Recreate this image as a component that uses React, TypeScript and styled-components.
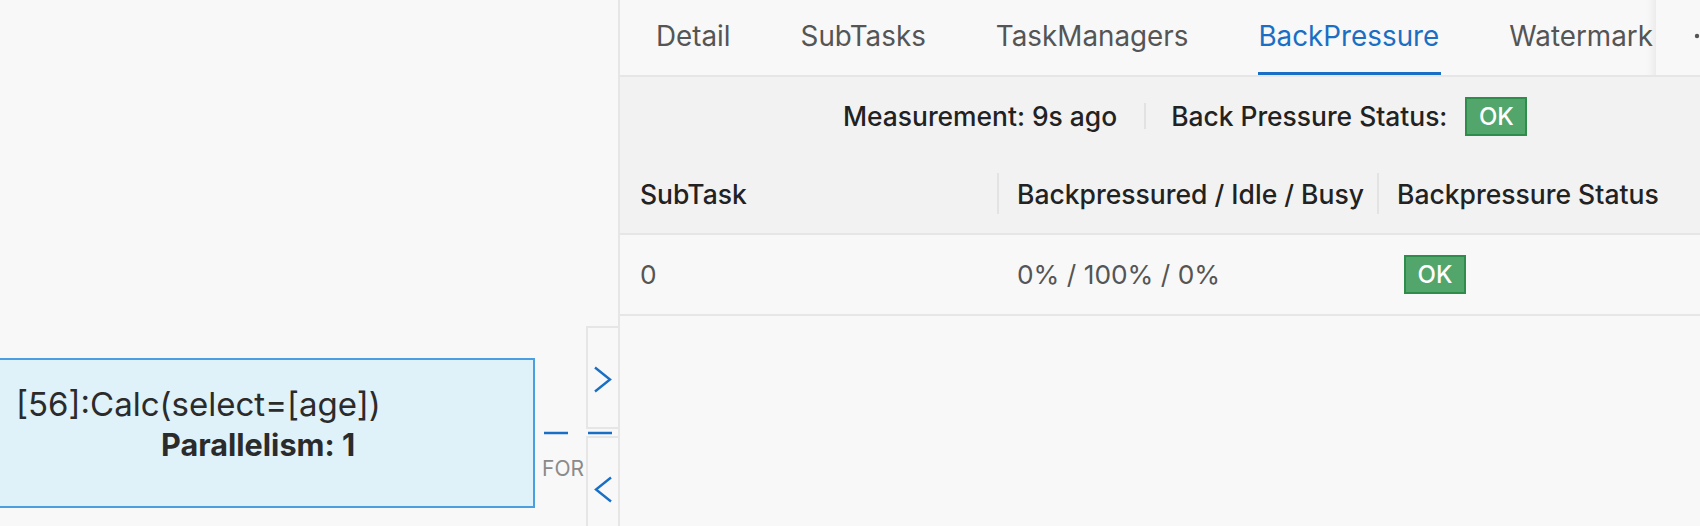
import React from 'react';
import styled, { createGlobalStyle } from 'styled-components';

const Global = createGlobalStyle`
  html, body { margin: 0; padding: 0; background: #f8f8f8; }
  body { font-family: Inter, "Noto Sans", sans-serif; -webkit-font-smoothing: antialiased; }
  #root { width: 1700px; height: 526px; overflow: hidden; }
`;

const BLUE = '#1a6fc5';

const Page = styled.div`
  display: flex;
  width: 1700px;
  height: 526px;
  overflow: hidden;
  background: #f8f8f8;
`;

const Canvas = styled.div`
  position: relative;
  flex: none;
  width: 618px;
  height: 100%;
  overflow: hidden;
`;

const Node = styled.div`
  position: absolute;
  left: -2px;
  top: 358px;
  width: 537px;
  height: 150px;
  box-sizing: border-box;
  border: 2px solid #4a9fe1;
  background: #dff1f9;
  padding-top: 26px;
  padding-left: 16px;
  color: #2b2b2b;
  line-height: 37px;
  white-space: nowrap;
`;

const NodeTitle = styled.div`
  font-size: 33px;
  font-weight: 400;
`;

const NodeMeta = styled.div`
  font-size: 30.6px;
  font-weight: 700;
  margin: 3px 0 0 145px;
`;

const Edge = styled.svg`
  position: absolute;
  left: 535px;
  top: 428px;
  overflow: visible;
`;

const EdgeLabel = styled.div`
  position: absolute;
  left: 542px;
  top: 456px;
  font-size: 21px;
  line-height: 26px;
  color: #8a8a8a;
  white-space: nowrap;
`;

const Toggle = styled.div<{ $top: number; $h: number }>`
  position: absolute;
  left: 586px;
  top: ${(p) => p.$top}px;
  width: 32px;
  height: ${(p) => p.$h}px;
  box-sizing: border-box;
  border: 2px solid #e6e6e6;
  border-right: none;
  background: #f8f8f8;
  display: flex;
  align-items: ${(p) => (p.$h > 100 ? 'flex-start' : 'center')};
  justify-content: center;
  padding-top: ${(p) => (p.$h > 100 ? 38 : 0)}px;
`;

const Panel = styled.div`
  flex: 1;
  min-width: 0;
  border-left: 2px solid #e6e6e6;
  display: flex;
  flex-direction: column;
  color: #222;
`;

const TabBar = styled.div`
  display: flex;
  height: 75px;
  border-bottom: 2px solid #e6e6e6;
  background: #f8f8f8;
`;

const TabList = styled.div`
  flex: none;
  width: 1036px;
  display: flex;
  gap: 70px;
  padding: 0 0 4px 36px;
  box-sizing: border-box;
  overflow: hidden;
  box-shadow: inset -12px 0 10px -10px rgba(0, 0, 0, 0.08);
`;

const Tab = styled.div<{ $active?: boolean }>`
  position: relative;
  display: flex;
  align-items: center;
  font-size: 27.8px;
  white-space: nowrap;
  color: ${(p) => (p.$active ? BLUE : '#555')};
  &::after {
    content: '';
    display: ${(p) => (p.$active ? 'block' : 'none')};
    position: absolute;
    left: 0;
    right: -2px;
    bottom: -5px;
    height: 4px;
    background: ${BLUE};
  }
`;

const More = styled.div`
  flex: none;
  display: flex;
  align-items: center;
  padding: 0 0 4px 37px;
`;

const Summary = styled.div`
  height: 78px;
  display: flex;
  align-items: center;
  padding-left: 223px;
  background: #f2f2f2;
  font-size: 26.4px;
  font-weight: 500;
  color: #222;
  white-space: nowrap;
`;

const Divider = styled.span`
  width: 2px;
  height: 26px;
  background: #e2e2e2;
  margin: 0 25px 0 27px;
`;

const Badge = styled.span<{ $offset?: number }>`
  display: inline-flex;
  align-items: center;
  justify-content: center;
  width: 62px;
  height: 39px;
  box-sizing: border-box;
  margin-left: ${(p) => p.$offset ?? 0}px;
  background: #52a56b;
  border: 2px solid #2e8d4b;
  color: #fff;
  font-size: 24px;
  font-weight: 500;
`;

const Table = styled.div`
  display: grid;
  grid-template-columns: 377px 380px 1fr;
`;

const HeadCell = styled.div<{ $sep?: boolean }>`
  position: relative;
  height: 78px;
  display: flex;
  align-items: center;
  padding-left: 20px;
  background: #f2f2f2;
  border-bottom: 2px solid #e6e6e6;
  font-size: 26.5px;
  font-weight: 500;
  color: #222;
  white-space: nowrap;
  &::before {
    content: '';
    display: ${(p) => (p.$sep ? 'block' : 'none')};
    position: absolute;
    left: 0;
    top: 18px;
    width: 2px;
    height: 41px;
    background: #e3e3e3;
  }
`;

const Cell = styled.div`
  height: 79px;
  display: flex;
  align-items: center;
  padding-left: 20px;
  border-bottom: 2px solid #e6e6e6;
  background: #f8f8f8;
  font-size: 26.3px;
  color: #555;
  white-space: nowrap;
`;

const Chevron = ({ dir }: { dir: 'right' | 'left' }) => (
  <svg width="20" height="27" viewBox="0 0 20 27">
    <polyline
      points={dir === 'right' ? '2,1.5 17,13.5 2,25.5' : '18,1.5 3,13.5 18,25.5'}
      fill="none"
      stroke={BLUE}
      strokeWidth="2.4"
    />
  </svg>
);

const Ellipsis = () => (
  <svg width="30" height="8" viewBox="0 0 30 8">
    <circle cx="4" cy="4" r="2.2" fill="#555" />
    <circle cx="14" cy="4" r="2.2" fill="#555" />
    <circle cx="24" cy="4" r="2.2" fill="#555" />
  </svg>
);

export default function App() {
  return (
    <>
      <Global />
      <Page>
        <Canvas>
          <Node>
            <NodeTitle>[56]:Calc(select=[age])</NodeTitle>
            <NodeMeta>Parallelism: 1</NodeMeta>
          </Node>
          <Edge width="90" height="10">
            <line x1="9" y1="5" x2="85" y2="5" stroke={BLUE} strokeWidth="2.4" strokeDasharray="24 20" />
          </Edge>
          <EdgeLabel>FOR</EdgeLabel>
          <Toggle $top={326} $h={103}>
            <Chevron dir="right" />
          </Toggle>
          <Toggle $top={436} $h={110}>
            <Chevron dir="left" />
          </Toggle>
        </Canvas>
        <Panel>
          <TabBar>
            <TabList>
              <Tab>Detail</Tab>
              <Tab>SubTasks</Tab>
              <Tab>TaskManagers</Tab>
              <Tab $active>BackPressure</Tab>
              <Tab>Watermark</Tab>
            </TabList>
            <More>
              <Ellipsis />
            </More>
          </TabBar>
          <Summary>
            <span>Measurement: 9s ago</span>
            <Divider />
            <span>Back Pressure Status:</span>
            <Badge $offset={18}>OK</Badge>
          </Summary>
          <Table>
            <HeadCell>SubTask</HeadCell>
            <HeadCell $sep>Backpressured / Idle / Busy</HeadCell>
            <HeadCell $sep>Backpressure Status</HeadCell>
            <Cell>0</Cell>
            <Cell>0% / 100% / 0%</Cell>
            <Cell>
              <Badge $offset={7}>OK</Badge>
            </Cell>
          </Table>
        </Panel>
      </Page>
    </>
  );
}
